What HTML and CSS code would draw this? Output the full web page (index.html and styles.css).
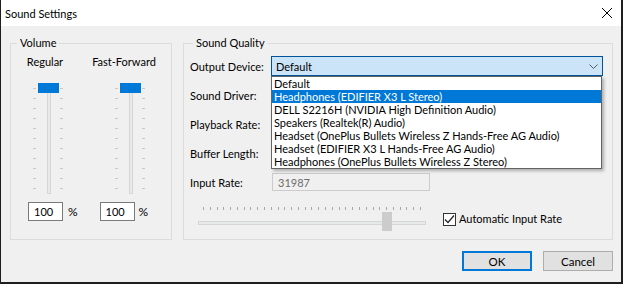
FILE: index.html
```html
<!DOCTYPE html>
<html>
<head>
  <meta charset="utf-8">
  <title>Sound Settings</title>
  <link rel="stylesheet" href="styles.css">
</head>
<body>
  <div class="dialog">
    <div class="titlebar">
      <span class="title">Sound Settings</span>
      <svg class="close" width="10" height="10" viewBox="0 0 10 10">
        <path d="M0 0L10 10M10 0L0 10" stroke="#000" stroke-width="1"/>
      </svg>
    </div>
    <div class="content">
      <div class="groups">
        <fieldset class="group group-volume">
          <legend>Volume</legend>
          <div class="vol-labels">
            <span class="vol-label vol-label-reg">Regular</span>
            <span class="vol-label vol-label-ff">Fast-Forward</span>
          </div>
          <div class="vol-sliders">
            <div class="vslider">
              <div class="vslider-track"></div>
              <div class="vslider-thumb"></div>
            </div>
            <div class="vslider">
              <div class="vslider-track"></div>
              <div class="vslider-thumb"></div>
            </div>
          </div>
          <div class="vol-inputs">
            <div class="vol-input"><span class="textbox">100</span><span class="pct">%</span></div>
            <div class="vol-input"><span class="textbox">100</span><span class="pct">%</span></div>
          </div>
        </fieldset>

        <fieldset class="group group-quality">
          <legend>Sound Quality</legend>
          <div class="field-row">
            <span class="field-label">Output Device:</span>
            <div class="combo-wrap">
              <div class="combo">
                <span>Default</span>
                <svg width="9" height="5" viewBox="0 0 9 5">
                  <polyline points="0.5,0.5 4.5,4.5 8.5,0.5" fill="none" stroke="#5a5a5a" stroke-width="1"/>
                </svg>
              </div>
              <ul class="dropdown">
                <li>Default</li>
                <li class="selected">Headphones (EDIFIER X3 L Stereo)</li>
                <li>DELL S2216H (NVIDIA High Definition Audio)</li>
                <li>Speakers (Realtek(R) Audio)</li>
                <li>Headset (OnePlus Bullets Wireless Z Hands-Free AG Audio)</li>
                <li>Headset (EDIFIER X3 L Hands-Free AG Audio)</li>
                <li>Headphones (OnePlus Bullets Wireless Z Stereo)</li>
              </ul>
            </div>
          </div>
          <div class="field-row">
            <span class="field-label">Sound Driver:</span>
          </div>
          <div class="field-row">
            <span class="field-label">Playback Rate:</span>
          </div>
          <div class="field-row">
            <span class="field-label">Buffer Length:</span>
          </div>
          <div class="field-row">
            <span class="field-label">Input Rate:</span>
            <span class="textbox textbox-disabled">31987</span>
          </div>
          <div class="rate-row">
            <div class="hslider">
              <div class="hslider-ticks"></div>
              <div class="hslider-track"></div>
              <div class="hslider-thumb"></div>
            </div>
            <label class="check">
              <span class="checkbox">
                <svg width="11" height="11" viewBox="0 0 11 11">
                  <polyline points="1,5.5 4,8.5 10,1.5" fill="none" stroke="#222" stroke-width="1.2"/>
                </svg>
              </span>
              Automatic Input Rate
            </label>
          </div>
        </fieldset>
      </div>

      <div class="buttons">
        <button class="btn btn-default">OK</button>
        <button class="btn">Cancel</button>
      </div>
    </div>
  </div>
</body>
</html>
```

FILE: styles.css
```css
* {
  box-sizing: border-box;
}

html,
body {
  margin: 0;
  padding: 0;
}

body {
  background: #1e1e1e;
  font-family: Lato, "Segoe UI", sans-serif;
  font-size: 11px;
  color: #000;
}

.dialog {
  width: 620px;
  height: 282px;
  margin-left: 1px;
  background: #f0f0f0;
}

/* title bar */
.titlebar {
  height: 26px;
  display: flex;
  align-items: center;
  justify-content: space-between;
  padding: 0 9px 0 4px;
  background: #fff;
}

.content {
  padding: 9px 8px 0 9px;
}

.groups {
  display: flex;
  gap: 11px;
}

/* group boxes */
.group {
  margin: 0;
  padding: 0;
  min-width: 0;
  border: 1px solid #dcdcdc;
}

.group legend {
  padding: 0 3px;
  line-height: 16px;
}

.group-volume {
  width: 162px;
}

.group-volume legend {
  margin-left: 6px;
}

.group-quality {
  width: 430px;
  padding: 0 0 7px 6px;
}

.group-quality legend {
  margin-left: 3px;
}

/* volume */
.vol-labels {
  display: flex;
  margin-top: 3px;
  line-height: 16px;
}

.vol-label {
  display: flex;
  justify-content: center;
  white-space: nowrap;
}

.vol-label-reg {
  width: 40px;
  margin-left: 14px;
}

.vol-label-ff {
  width: 60px;
  margin-left: 29px;
}

.vol-sliders {
  display: flex;
  margin-top: 13px;
  padding-left: 22px;
  gap: 51px;
}

.vslider {
  position: relative;
  width: 31px;
  height: 111px;
}

.vslider::before,
.vslider::after {
  content: "";
  position: absolute;
  top: 5px;
  width: 3px;
  height: 101px;
  background: repeating-linear-gradient(to bottom, #c8c8c8 0 1px, transparent 1px 10px);
}

.vslider::before {
  left: 0;
}

.vslider::after {
  left: 27px;
}

.vslider-track {
  position: absolute;
  left: 14px;
  top: 2px;
  width: 4px;
  height: 109px;
  background: #e7eaea;
  border: 1px solid #d6d6d6;
}

.vslider-thumb {
  position: absolute;
  left: 5px;
  top: 0;
  width: 21px;
  height: 10px;
  background: #0078d7;
}

.vol-inputs {
  display: flex;
  margin-top: 8px;
  padding-left: 17px;
}

.vol-input {
  display: flex;
  align-items: center;
  gap: 5px;
  width: 81px;
}

.vol-input + .vol-input {
  gap: 4px;
}

.pct {
  font-size: 12px;
}

.textbox {
  display: flex;
  align-items: center;
  width: 35px;
  height: 19px;
  padding-left: 5px;
  background: #fff;
  border: 1px solid #7a7a7a;
}

/* sound quality */
.field-row {
  display: flex;
  align-items: center;
  height: 20px;
  margin-top: 9px;
}

.group-quality legend + .field-row {
  margin-top: 5px;
}

.field-label {
  width: 81px;
  white-space: nowrap;
}

.combo-wrap {
  position: relative;
  width: 332px;
}

.combo {
  display: flex;
  align-items: center;
  justify-content: space-between;
  height: 20px;
  padding: 0 4px 0 4px;
  background: #cce4f7;
  border: 1px solid #005499;
}

.dropdown {
  position: absolute;
  top: 100%;
  left: 0;
  z-index: 2;
  width: 331px;
  margin: 0;
  padding: 0;
  list-style: none;
  background: #fff;
  border: 1px solid #646464;
  box-shadow: 2px 2px 3px rgba(0, 0, 0, .28);
}

.dropdown li {
  height: 13px;
  line-height: 13px;
  padding-left: 2px;
  white-space: nowrap;
}

.dropdown li.selected {
  background: #0078d7;
  color: #fff;
}

.textbox-disabled {
  width: 158px;
  height: 18px;
  margin-left: 1px;
  padding-left: 5px;
  color: #6d6d6d;
  background: #f0f0f0;
  border-color: #cccccc;
}

.rate-row {
  display: flex;
  align-items: center;
  margin-top: 14px;
}

.hslider {
  position: relative;
  width: 228px;
  height: 26px;
  margin-left: 8px;
}

.hslider-ticks {
  position: absolute;
  left: 5px;
  top: 1px;
  width: 218px;
  height: 3px;
  background: repeating-linear-gradient(to right, #a8a8a8 0 1px, transparent 1px 6.78px);
}

.hslider-track {
  position: absolute;
  left: 0;
  top: 15px;
  width: 100%;
  height: 4px;
  background: #e7eaea;
  border: 1px solid #d6d6d6;
}

.hslider-thumb {
  position: absolute;
  left: 184px;
  top: 6px;
  width: 10px;
  height: 19px;
  background: #cccccc;
}

.check {
  display: flex;
  align-items: center;
  gap: 3px;
  margin-left: 17px;
  line-height: 16px;
}

.checkbox {
  display: flex;
  align-items: center;
  justify-content: center;
  width: 13px;
  height: 13px;
  background: #fff;
  border: 1px solid #333;
}

/* buttons */
.buttons {
  display: flex;
  justify-content: flex-end;
  gap: 11px;
  margin-top: 11px;
}

.btn {
  width: 70px;
  height: 20px;
  padding: 0;
  font: inherit;
  font-size: 11.5px;
  color: #000;
  background: #e1e1e1;
  border: 1px solid #adadad;
}

.btn-default {
  border: 2px solid #0078d7;
}
```
